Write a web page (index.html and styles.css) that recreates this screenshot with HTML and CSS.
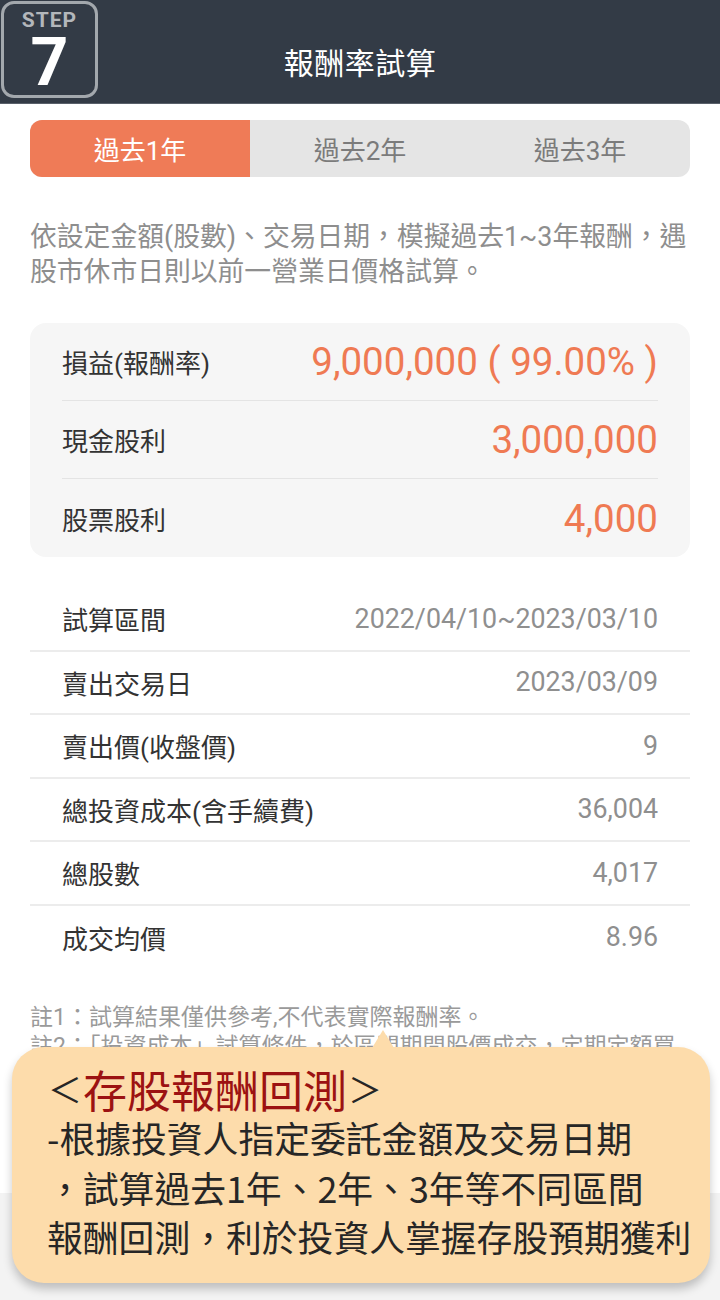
FILE: index.html
```html
<!DOCTYPE html>
<html lang="zh-Hant">
<head>
<meta charset="utf-8">
<title>報酬率試算</title>
<link rel="stylesheet" href="styles.css">
</head>
<body>
<div class="page">
  <header class="topbar">
    <div class="step-badge">
      <span class="step-label">STEP</span>
      <span class="step-num">7</span>
    </div>
    <h1 class="title">報酬率試算</h1>
  </header>

  <main class="content">
    <nav class="tabs">
      <div class="tab active">過去1年</div>
      <div class="tab">過去2年</div>
      <div class="tab">過去3年</div>
    </nav>

    <p class="desc">依設定金額(股數)、交易日期，模擬過去1~3年報酬，遇股市休市日則以前一營業日價格試算。</p>

    <section class="summary">
      <div class="sum-row">
        <span class="sum-label">損益(報酬率)</span>
        <span class="sum-value">9,000,000 ( 99.00% )</span>
      </div>
      <div class="sum-row">
        <span class="sum-label">現金股利</span>
        <span class="sum-value">3,000,000</span>
      </div>
      <div class="sum-row">
        <span class="sum-label">股票股利</span>
        <span class="sum-value">4,000</span>
      </div>
    </section>

    <section class="details">
      <div class="det-row"><span class="det-label">試算區間</span><span class="det-value">2022/04/10~2023/03/10</span></div>
      <div class="det-row"><span class="det-label">賣出交易日</span><span class="det-value">2023/03/09</span></div>
      <div class="det-row"><span class="det-label">賣出價(收盤價)</span><span class="det-value">9</span></div>
      <div class="det-row"><span class="det-label">總投資成本(含手續費)</span><span class="det-value">36,004</span></div>
      <div class="det-row"><span class="det-label">總股數</span><span class="det-value">4,017</span></div>
      <div class="det-row"><span class="det-label">成交均價</span><span class="det-value">8.96</span></div>
    </section>

    <div class="notes">
      <p>註1：試算結果僅供參考,不代表實際報酬率。</p>
      <p>註2：「投資成本」試算條件，於區間期間股價成交，定期定額買</p>
    </div>
  </main>

  <footer class="bottom"></footer>

  <div class="callout">
    <div class="callout-title"><span class="br">＜</span><span class="red">存股報酬回測</span><span class="br">＞</span></div>
    <div class="callout-line">-根據投資人指定委託金額及交易日期</div>
    <div class="callout-line">，試算過去1年、2年、3年等不同區間</div>
    <div class="callout-line">報酬回測，利於投資人掌握存股預期獲利</div>
  </div>
</div>
</body>
</html>
```

FILE: styles.css
```css
* { box-sizing: border-box; margin: 0; padding: 0; }

html, body {
  width: 720px;
  height: 1300px;
  overflow: hidden;
  background: #ffffff;
  font-family: Roboto, "Noto Sans CJK TC", sans-serif;
}

.page {
  position: relative;
  width: 720px;
  height: 1300px;
  display: grid;
  grid-template-rows: 104px 1089px 107px;
}

/* header */
.topbar {
  position: relative;
  background: #333b46;
  border-bottom: 1px solid #59606a;
  display: flex;
  align-items: center;
  justify-content: center;
}

.title {
  font-family: "Noto Sans CJK TC", sans-serif;
  font-weight: 400;
  font-size: 30px;
  color: #ffffff;
  margin-top: 18px;
  letter-spacing: 0.5px;
}

.step-badge {
  position: absolute;
  left: 1px;
  top: 1px;
  width: 97px;
  height: 97px;
  border: 3px solid #a3a8ad;
  border-radius: 13px;
  display: flex;
  flex-direction: column;
  align-items: center;
}

.step-label {
  font-family: Roboto, sans-serif;
  font-weight: 700;
  font-size: 21px;
  color: #b3b7bb;
  letter-spacing: 1px;
  line-height: 22px;
  margin-top: 5px;
}

.step-num {
  font-family: Roboto, sans-serif;
  font-weight: 700;
  font-size: 66px;
  line-height: 50px;
  color: #ffffff;
  margin-top: 7px;
}

/* content */
.content {
  padding: 16px 30px 0;
  overflow: hidden;
  display: flex;
  flex-direction: column;
}

.tabs {
  display: grid;
  grid-template-columns: repeat(3, 1fr);
  height: 57px;
  background: #e5e5e5;
  border-radius: 12px;
  overflow: hidden;
}

.tab {
  display: flex;
  align-items: center;
  justify-content: center;
  font-size: 26px;
  color: #7b7b7b;
}

.tab.active {
  background: #ef7b57;
  color: #ffffff;
}

.desc {
  margin-top: 43px;
  font-size: 26.8px;
  line-height: 35px;
  color: #8e8e8e;
}

.summary {
  margin-top: 33px;
  background: #f6f6f6;
  border-radius: 16px;
  padding: 0 32px;
}

.sum-row {
  height: 78px;
  display: flex;
  align-items: center;
  justify-content: space-between;
  border-bottom: 1px solid #e4e4e4;
}

.sum-row:last-child { border-bottom: none; }

.sum-label {
  font-size: 26px;
  color: #333333;
}

.sum-value {
  font-size: 38.5px;
  color: #ef7a53;
}

.details {
  margin-top: 31px;
}

.det-row {
  height: 63.5px;
  display: flex;
  align-items: center;
  justify-content: space-between;
  padding: 0 32px;
  border-bottom: 2px solid #ececec;
}

.det-row:last-child { border-bottom: none; }

.det-label {
  font-size: 26px;
  color: #333333;
}

.det-value {
  font-size: 26.8px;
  color: #8f8f8f;
}

.notes {
  margin-top: 34px;
  font-size: 23px;
  line-height: 29px;
  color: #9a9a9a;
  white-space: nowrap;
}

.bottom {
  background: #f3f3f3;
}

/* callout overlay */
.callout {
  position: absolute;
  left: 12px;
  top: 1047px;
  width: 698px;
  height: 236px;
  background: #fddcab;
  border-radius: 32px;
  box-shadow: 0 6px 10px rgba(0, 0, 0, 0.22);
  padding: 18px 0 0 35px;
  font-family: "Noto Sans CJK TC", sans-serif;
  color: #262626;
}

.callout::before {
  content: "";
  position: absolute;
  left: 360px;
  top: -17px;
  border-left: 11px solid transparent;
  border-right: 11px solid transparent;
  border-bottom: 18px solid #fddcab;
}

.callout-title {
  height: 48px;
  display: flex;
  align-items: center;
  font-weight: 400;
}

.callout-title .br {
  font-size: 34px;
  line-height: 48px;
  color: #262626;
  width: 36px;
  text-align: center;
}

.callout-title .red {
  font-size: 44px;
  line-height: 48px;
  color: #9c1212;
}

.callout-line {
  font-size: 35.8px;
  line-height: 49.5px;
  font-weight: 400;
  white-space: nowrap;
}
```
